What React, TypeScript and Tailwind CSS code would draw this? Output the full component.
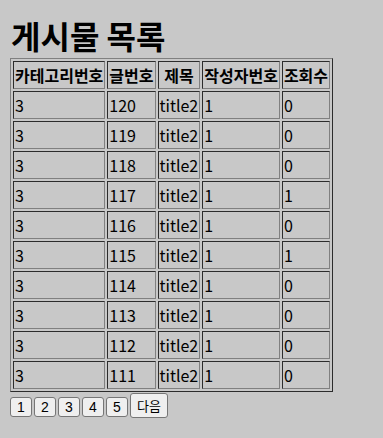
import React from "react";

type Post = { category: number; id: number; title: string; writer: number; views: number };

const posts: Post[] = [
  { category: 3, id: 120, title: "title2", writer: 1, views: 0 },
  { category: 3, id: 119, title: "title2", writer: 1, views: 0 },
  { category: 3, id: 118, title: "title2", writer: 1, views: 0 },
  { category: 3, id: 117, title: "title2", writer: 1, views: 1 },
  { category: 3, id: 116, title: "title2", writer: 1, views: 0 },
  { category: 3, id: 115, title: "title2", writer: 1, views: 1 },
  { category: 3, id: 114, title: "title2", writer: 1, views: 0 },
  { category: 3, id: 113, title: "title2", writer: 1, views: 0 },
  { category: 3, id: 112, title: "title2", writer: 1, views: 0 },
  { category: 3, id: 111, title: "title2", writer: 1, views: 0 },
];

const headers = ["카테고리번호", "글번호", "제목", "작성자번호", "조회수"];

const cell = "border border-[#808080] [border-style:inset] px-px py-px";

export default function App() {
  return (
    <div
      className="min-h-[438px] bg-[#c8c8c8] px-[10px] pt-[12px] text-black"
      style={{ fontFamily: '"Noto Sans CJK KR", "Noto Sans", sans-serif' }}
    >
      <h1 className="text-[32px] font-bold leading-[46px] pl-px">게시물 목록</h1>
      <table className="border border-[#808080] [border-style:outset] border-separate border-spacing-[2px] text-[16px] leading-[24px]">
        <thead>
          <tr>
            {headers.map((h) => (
              <th key={h} className={`${cell} font-bold text-center`}>
                {h}
              </th>
            ))}
          </tr>
        </thead>
        <tbody>
          {posts.map((p) => (
            <tr key={p.id}>
              <td className={cell}>{p.category}</td>
              <td className={cell}>{p.id}</td>
              <td className={cell}>{p.title}</td>
              <td className={cell}>{p.writer}</td>
              <td className={cell}>{p.views}</td>
            </tr>
          ))}
        </tbody>
      </table>
      <div className="mt-px flex items-end gap-[2px]">
        {[1, 2, 3, 4, 5].map((n) => (
          <button
            key={n}
            className="h-[20px] w-[22px] rounded-[3px] border border-[#767676] bg-[#efefef] text-[14px] leading-none"
            style={{ fontFamily: '"Liberation Sans", Arial, sans-serif' }}
          >
            {n}
          </button>
        ))}
        <button className="mb-[-1px] h-[25px] rounded-[3px] border border-[#767676] bg-[#efefef] px-[6px] text-[13px] leading-none">
          다음
        </button>
      </div>
    </div>
  );
}
